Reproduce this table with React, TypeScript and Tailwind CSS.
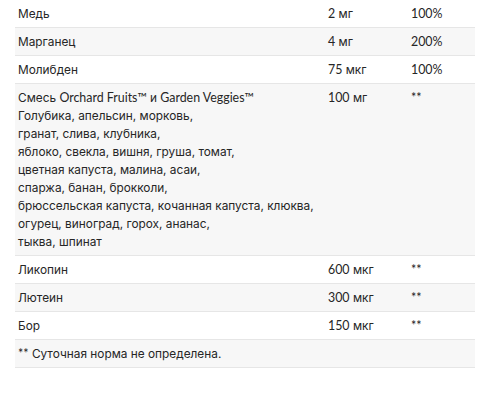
import React from "react";

type Row = { name: React.ReactNode; amount: React.ReactNode; pct: string };

const L = ({ children }: { children: React.ReactNode }) => (
  <span className="font-[Lato,sans-serif] text-[12.4px] leading-none">{children}</span>
);

const rows: Row[] = [
  { name: "Медь", amount: <><L>2</L> мг</>, pct: "100%" },
  { name: "Марганец", amount: <><L>4</L> мг</>, pct: "200%" },
  { name: "Молибден", amount: <><L>75</L> мкг</>, pct: "100%" },
  {
    name: (
      <>
        Смесь <L>Orchard Fruits™</L> и <L>Garden Veggies™</L>
        <br />
        Голубика, апельсин, морковь,
        <br />
        гранат, слива, клубника,
        <br />
        яблоко, свекла, вишня, груша, томат,
        <br />
        цветная капуста, малина, асаи,
        <br />
        спаржа, банан, брокколи,
        <br />
        брюссельская капуста, кочанная капуста, клюква,
        <br />
        огурец, виноград, горох, ананас,
        <br />
        тыква, шпинат
      </>
    ),
    amount: <><L>100</L> мг</>,
    pct: "**",
  },
  { name: "Ликопин", amount: <><L>600</L> мкг</>, pct: "**" },
  { name: "Лютеин", amount: <><L>300</L> мкг</>, pct: "**" },
  { name: "Бор", amount: <><L>150</L> мкг</>, pct: "**" },
];

export default function App() {
  return (
    <div className="w-[480px] h-[399px] bg-white pl-[15px] pr-[5px] font-[Inter,sans-serif] text-[11.85px] leading-[18px] text-[#262626]">
      {rows.map((r, i) => (
        <div
          key={i}
          className={`flex border-b border-[#e6e6e6] py-[4.5px] ${i % 2 === 1 ? "bg-[#f7f7f7]" : "bg-white"}`}
        >
          <div className="w-[310px] pl-[3px]">{r.name}</div>
          <div className="w-[83px] pl-[3px]">{r.amount}</div>
          <div className="flex-1 pl-[3px]">
            <L>{r.pct}</L>
          </div>
        </div>
      ))}
      <div className="border-b border-[#e6e6e6] bg-[#f7f7f7] py-[4.5px] pl-[3px]">
        <L>**</L> Суточная норма не определена.
      </div>
    </div>
  );
}
